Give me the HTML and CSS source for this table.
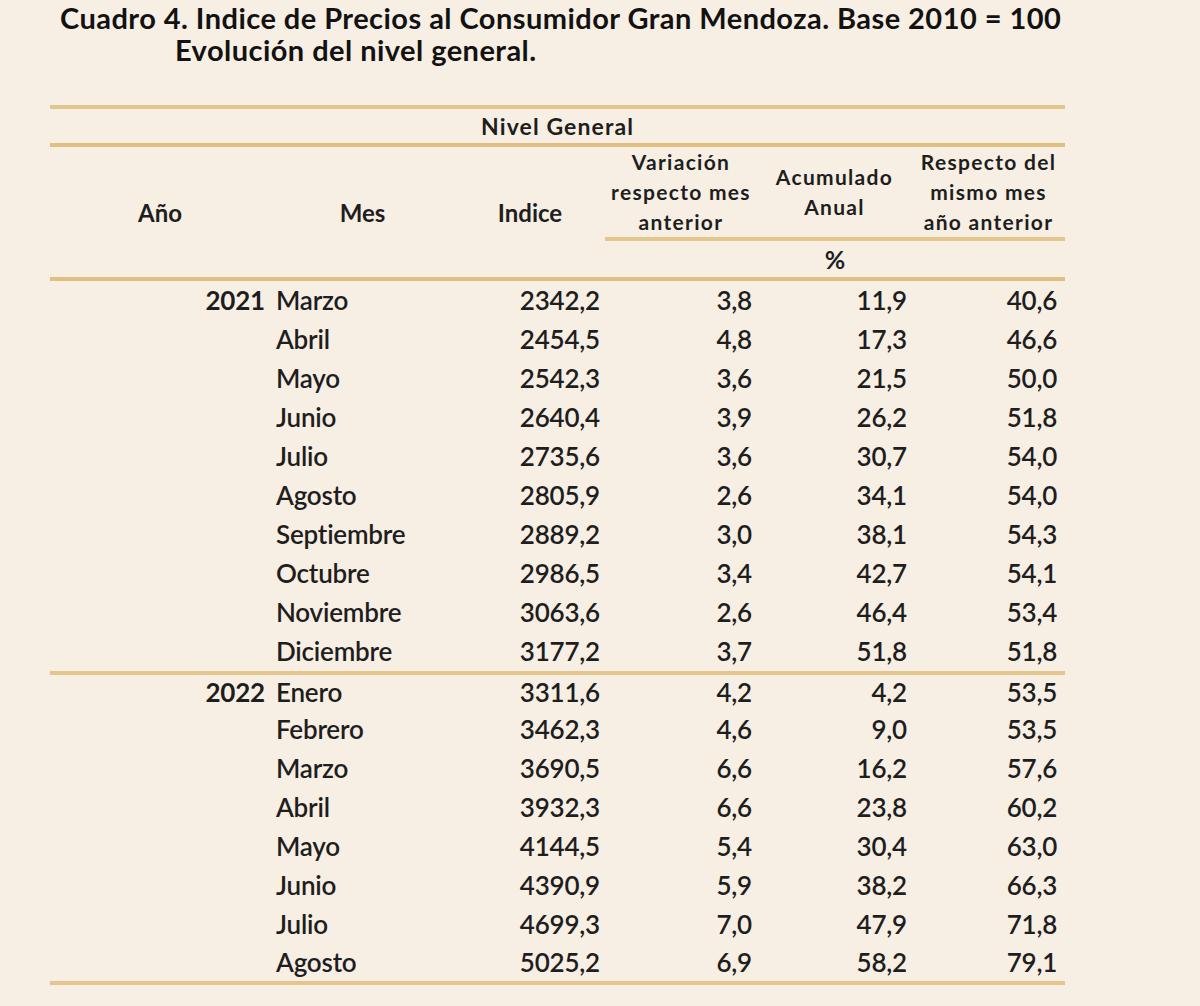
FILE: index.html
```html
<!DOCTYPE html>
<html lang="es">
<head>
<meta charset="utf-8">
<link rel="stylesheet" href="styles.css">
</head>
<body>
<div class="title">
  <div class="t1">Cuadro 4. Indice de Precios al Consumidor Gran Mendoza. Base 2010 = 100</div>
  <div class="t2">Evolución del nivel general.</div>
</div>
<table class="ipc">
  <colgroup>
    <col class="c-ano"><col class="c-mes"><col class="c-ind"><col class="c-var"><col class="c-acu"><col class="c-res">
  </colgroup>
  <thead>
    <tr class="r-nivel"><th colspan="6">Nivel General</th></tr>
    <tr class="r-head">
      <th rowspan="2" class="h-tall">Año</th>
      <th rowspan="2" class="h-tall">Mes</th>
      <th rowspan="2" class="h-tall">Indice</th>
      <th class="h-sub">Variación<br>respecto mes<br>anterior</th>
      <th class="h-sub">Acumulado<br>Anual</th>
      <th class="h-sub">Respecto del<br>mismo mes<br>año anterior</th>
    </tr>
    <tr class="r-pct"><th colspan="3">%</th></tr>
  </thead>
  <tbody>
    <tr><td>2021</td><td class="mes">Marzo</td><td>2342,2</td><td>3,8</td><td>11,9</td><td>40,6</td></tr>
    <tr><td></td><td class="mes">Abril</td><td>2454,5</td><td>4,8</td><td>17,3</td><td>46,6</td></tr>
    <tr><td></td><td class="mes">Mayo</td><td>2542,3</td><td>3,6</td><td>21,5</td><td>50,0</td></tr>
    <tr><td></td><td class="mes">Junio</td><td>2640,4</td><td>3,9</td><td>26,2</td><td>51,8</td></tr>
    <tr><td></td><td class="mes">Julio</td><td>2735,6</td><td>3,6</td><td>30,7</td><td>54,0</td></tr>
    <tr><td></td><td class="mes">Agosto</td><td>2805,9</td><td>2,6</td><td>34,1</td><td>54,0</td></tr>
    <tr><td></td><td class="mes">Septiembre</td><td>2889,2</td><td>3,0</td><td>38,1</td><td>54,3</td></tr>
    <tr><td></td><td class="mes">Octubre</td><td>2986,5</td><td>3,4</td><td>42,7</td><td>54,1</td></tr>
    <tr><td></td><td class="mes">Noviembre</td><td>3063,6</td><td>2,6</td><td>46,4</td><td>53,4</td></tr>
    <tr><td></td><td class="mes">Diciembre</td><td>3177,2</td><td>3,7</td><td>51,8</td><td>51,8</td></tr>
    <tr class="r-year"><td>2022</td><td class="mes">Enero</td><td>3311,6</td><td>4,2</td><td>4,2</td><td>53,5</td></tr>
    <tr><td></td><td class="mes">Febrero</td><td>3462,3</td><td>4,6</td><td>9,0</td><td>53,5</td></tr>
    <tr><td></td><td class="mes">Marzo</td><td>3690,5</td><td>6,6</td><td>16,2</td><td>57,6</td></tr>
    <tr><td></td><td class="mes">Abril</td><td>3932,3</td><td>6,6</td><td>23,8</td><td>60,2</td></tr>
    <tr><td></td><td class="mes">Mayo</td><td>4144,5</td><td>5,4</td><td>30,4</td><td>63,0</td></tr>
    <tr><td></td><td class="mes">Junio</td><td>4390,9</td><td>5,9</td><td>38,2</td><td>66,3</td></tr>
    <tr><td></td><td class="mes">Julio</td><td>4699,3</td><td>7,0</td><td>47,9</td><td>71,8</td></tr>
    <tr class="r-last"><td></td><td class="mes">Agosto</td><td>5025,2</td><td>6,9</td><td>58,2</td><td>79,1</td></tr>
  </tbody>
</table>
</body>
</html>
```

FILE: styles.css
```css
html, body {
  margin: 0;
  padding: 0;
  background: #f8efe4;
}
body {
  font-family: Lato, "Open Sans", sans-serif;
  color: #1e1e1e;
  width: 1200px;
  height: 1006px;
  overflow: hidden;
}
.title {
  font-weight: 700;
  font-size: 29px;
  color: #121212;
  letter-spacing: 0.45px;
}
.t1 {
  padding-left: 60px;
  line-height: 35px;
}
.t2 {
  padding-left: 175px;
  line-height: 30px;
}
.ipc {
  margin-top: 40px;
  margin-left: 50px;
  width: 1015px;
  table-layout: fixed;
  border-collapse: separate;
  border-spacing: 0;
}
.c-ano { width: 220px; }
.c-mes { width: 185px; }
.c-ind { width: 150px; }
.c-var { width: 152px; }
.c-acu { width: 155px; }
.c-res { width: 153px; }

.ipc th {
  font-weight: 700;
  padding: 0;
  text-align: center;
  white-space: nowrap;
}
.r-nivel th {
  border-top: 4px solid #e3c68b;
  border-bottom: 4px solid #e0bf82;
  height: 34px;
  line-height: 34px;
  font-size: 23px;
  letter-spacing: 1.1px;
}
.h-tall {
  font-size: 24px;
  vertical-align: middle;
  border-bottom: 4px solid #e0bf82;
}
.h-sub {
  font-size: 21px;
  line-height: 30px;
  height: 89px;
  vertical-align: middle;
  letter-spacing: 1.3px;
  border-bottom: 4px solid #e3c68b;
}
.r-pct th {
  font-size: 25px;
  height: 36px;
  line-height: 36px;
  border-bottom: 4px solid #e0bf82;
}
.ipc td {
  font-size: 26px;
  font-weight: 600;
  line-height: 39px;
  height: 39px;
  padding: 0 5px 0 0;
  text-align: right;
  letter-spacing: -0.2px;
  white-space: nowrap;
}
.ipc td:first-child {
  font-weight: 700;
}
.ipc td:last-child {
  padding-right: 8px;
}
.ipc td.mes {
  text-align: left;
  padding: 0 0 0 6px;
}
.r-year td {
  border-top: 4px solid #e3c68b;
  line-height: 35px;
  height: 35px;
}
.r-last td {
  border-bottom: 4px solid #e6c48e;
  line-height: 37px;
  height: 37px;
}
```
